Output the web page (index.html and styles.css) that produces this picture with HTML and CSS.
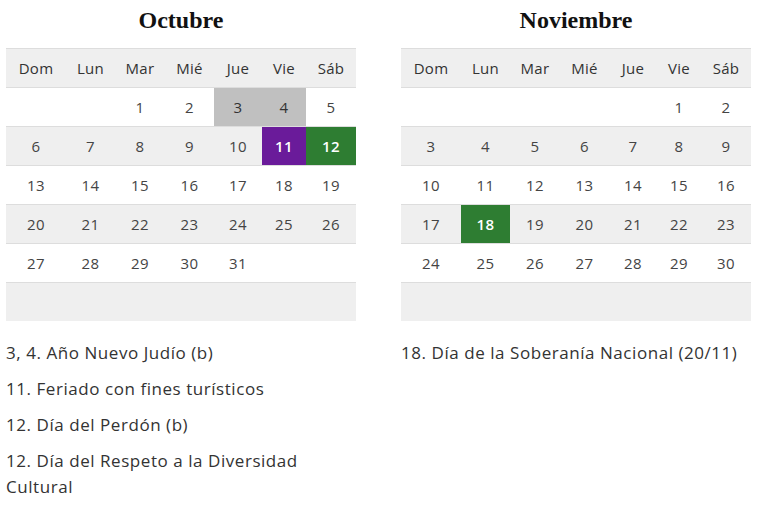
FILE: index.html
```html
<!DOCTYPE html>
<html lang="es">
<head>
<meta charset="utf-8">
<title>Calendario</title>
<link rel="stylesheet" href="styles.css">
</head>
<body>
<div class="months">
  <section class="month">
    <h2 class="month-title">Octubre</h2>
    <table class="cal">
      <colgroup><col class="c1"><col class="c2"><col class="c3"><col class="c4"><col class="c5"><col class="c6"><col class="c7"></colgroup>
      <thead><tr><th>Dom</th><th>Lun</th><th>Mar</th><th>Mié</th><th>Jue</th><th>Vie</th><th>Sáb</th></tr></thead>
      <tbody>
        <tr><td></td><td></td><td>1</td><td>2</td><td class="hl-gray">3</td><td class="hl-gray">4</td><td>5</td></tr>
        <tr><td>6</td><td>7</td><td>8</td><td>9</td><td>10</td><td class="hl-purple">11</td><td class="hl-green">12</td></tr>
        <tr><td>13</td><td>14</td><td>15</td><td>16</td><td>17</td><td>18</td><td>19</td></tr>
        <tr><td>20</td><td>21</td><td>22</td><td>23</td><td>24</td><td>25</td><td>26</td></tr>
        <tr><td>27</td><td>28</td><td>29</td><td>30</td><td>31</td><td></td><td></td></tr>
        <tr><td></td><td></td><td></td><td></td><td></td><td></td><td></td></tr>
      </tbody>
    </table>
    <div class="notes">
      <p>3, 4. Año Nuevo Judío (b)</p>
      <p>11. Feriado con fines turísticos</p>
      <p>12. Día del Perdón (b)</p>
      <p>12. Día del Respeto a la Diversidad Cultural</p>
    </div>
  </section>
  <section class="month">
    <h2 class="month-title">Noviembre</h2>
    <table class="cal">
      <colgroup><col class="c1"><col class="c2"><col class="c3"><col class="c4"><col class="c5"><col class="c6"><col class="c7"></colgroup>
      <thead><tr><th>Dom</th><th>Lun</th><th>Mar</th><th>Mié</th><th>Jue</th><th>Vie</th><th>Sáb</th></tr></thead>
      <tbody>
        <tr><td></td><td></td><td></td><td></td><td></td><td>1</td><td>2</td></tr>
        <tr><td>3</td><td>4</td><td>5</td><td>6</td><td>7</td><td>8</td><td>9</td></tr>
        <tr><td>10</td><td>11</td><td>12</td><td>13</td><td>14</td><td>15</td><td>16</td></tr>
        <tr><td>17</td><td class="hl-green">18</td><td>19</td><td>20</td><td>21</td><td>22</td><td>23</td></tr>
        <tr><td>24</td><td>25</td><td>26</td><td>27</td><td>28</td><td>29</td><td>30</td></tr>
        <tr><td></td><td></td><td></td><td></td><td></td><td></td><td></td></tr>
      </tbody>
    </table>
    <div class="notes">
      <p>18. Día de la Soberanía Nacional (20/11)</p>
    </div>
  </section>
</div>
</body>
</html>
```
FILE: styles.css
```css
html, body {
  margin: 0;
  padding: 0;
  background: #ffffff;
}
body {
  font-family: "Open Sans", "DejaVu Sans", sans-serif;
  color: #333333;
}
.months {
  display: flex;
  gap: 45px;
  padding: 0 6px;
}
.month {
  width: 350px;
  flex: none;
}
.month-title {
  margin: 6px 0 14px;
  font-family: "Liberation Serif", "DejaVu Serif", serif;
  font-weight: bold;
  font-size: 24px;
  line-height: 28px;
  text-align: center;
  color: #111111;
}
.cal {
  width: 350px;
  table-layout: fixed;
  border-collapse: collapse;
  font-size: 15px;
  letter-spacing: 0.3px;
}
.c1 { width: 60px; }
.c2 { width: 49px; }
.c3 { width: 50px; }
.c4 { width: 49px; }
.c5 { width: 48px; }
.c6 { width: 44px; }
.c7 { width: 50px; }
.cal tr {
  border-top: 1px solid #dddddd;
}
.cal th,
.cal td {
  height: 38px;
  padding: 0;
  text-align: center;
  vertical-align: middle;
  font-weight: normal;
  color: #444444;
}
.cal th {
  color: #333333;
}
.cal thead tr {
  background: #efefef;
}
.cal tbody tr:nth-child(even) {
  background: #efefef;
}
.cal tbody tr:nth-child(odd) {
  background: #ffffff;
}
.cal td.hl-gray {
  background: #c0c0c0;
  color: #333333;
}
.cal td.hl-purple {
  background: #6a1b9a;
  color: #ffffff;
  font-weight: 600;
}
.cal td.hl-green {
  background: #2e7d32;
  color: #ffffff;
  font-weight: 600;
}
.notes {
  margin-top: 19px;
  font-size: 17px;
  line-height: 26px;
  letter-spacing: 0.55px;
  color: #333333;
}
.notes p {
  margin: 0 0 10px;
}
```
